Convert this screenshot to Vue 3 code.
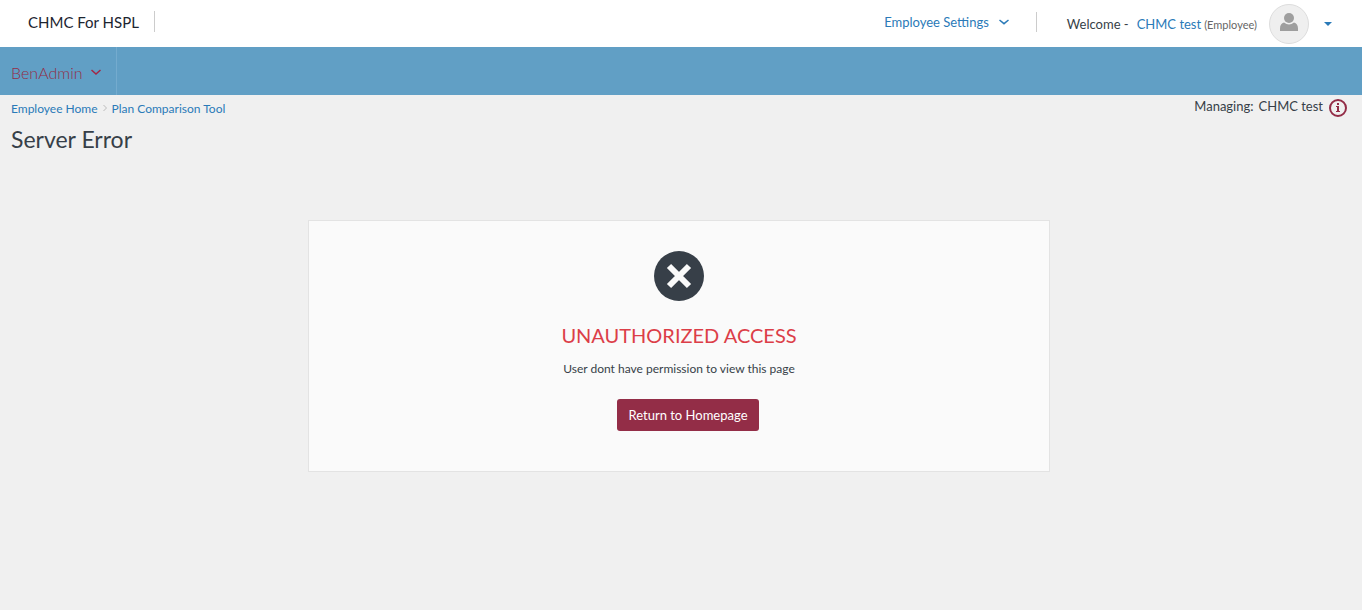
<script setup>
const trail = ['Employee Home', 'Plan Comparison Tool']
</script>

<template>
  <div class="page">
    <header class="top">
      <div class="brand">CHMC For HSPL</div>
      <div class="tools">
        <button class="settings" type="button">
          Employee Settings
          <svg width="10" height="6" viewBox="0 0 10 6"><path d="M.5 1L5 4.700 9.500 1" /></svg>
        </button>
        <div class="welcome">
          <span>Welcome -</span>
          <a href="#">CHMC test</a>
          <small>(Employee)</small>
        </div>
        <button class="account" type="button" aria-label="Account menu">
          <span class="avatar">
            <svg width="18" height="18" viewBox="0 0 18 18"><circle cx="9" cy="5" r="5" /><path d="M0 18v-2.500C0 12 1.500 10 4 9.500Q9 13.500 14 9.500C16.500 10 18 12 18 15.500V18z" /></svg>
          </span>
          <svg class="caret" width="8" height="4" viewBox="0 0 8 4"><path d="M0 0h8L4 4z" /></svg>
        </button>
      </div>
    </header>
    <nav class="menu">
      <button type="button">
        BenAdmin
        <svg width="10" height="6" viewBox="0 0 10 6"><path d="M.5 1L5 5l4.500-4" /></svg>
      </button>
    </nav>
    <div class="context">
      <nav class="crumbs" aria-label="Breadcrumb">
        <template v-for="(item, i) in trail" :key="item">
          <svg v-if="i" width="4" height="8" viewBox="0 0 4 8"><path d="M.5 1l3 3-3 3" /></svg>
          <a href="#">{{ item }}</a>
        </template>
      </nav>
      <div class="managing">
        <span>Managing:</span>
        <span>CHMC test</span>
        <button type="button" aria-label="Information">
          <svg width="20" height="20" viewBox="0 0 20 20"><circle cx="10" cy="10" r="8" /><path class="mark" d="M9 5h2v2H9zM8 8h3v5h1v1H8v-1h1V9H8z" /></svg>
        </button>
      </div>
    </div>
    <h1>Server Error</h1>
    <main>
      <section class="card">
        <svg class="fail" width="50" height="50" viewBox="0 0 50 50"><circle cx="25" cy="25" r="25" /><path d="M15 15l20 20M35 15L15 35" /></svg>
        <h2>UNAUTHORIZED ACCESS</h2>
        <p>User dont have permission to view this page</p>
        <button type="button">Return to Homepage</button>
      </section>
    </main>
  </div>
</template>

<style>
body {
  background: #fff;
}
</style>

<style scoped>
.page {
  box-sizing: border-box;
  min-height: 100vh;
  margin-right: 6px;
  background: #f0f0f0;
  color: #373f48;
  font-family: Lato, "Liberation Sans", sans-serif;
  font-size: 13px;
}
button {
  border: 0;
  padding: 0;
  background: none;
  color: inherit;
  font: inherit;
  cursor: pointer;
}
a {
  color: #2a7ab8;
  text-decoration: none;
}
svg {
  display: block;
  flex: none;
}
.top {
  display: flex;
  justify-content: space-between;
  height: 47px;
  background: #fff;
}
.brand {
  height: 21px;
  margin: 11px 0 0 28px;
  padding-right: 15px;
  border-right: 1px solid #ccc;
  color: #1c2530;
  font-size: 15px;
  line-height: 22px;
}
.tools {
  display: flex;
  align-items: center;
  padding-right: 30px;
}
.settings {
  display: flex;
  align-items: center;
  gap: 10px;
  height: 20px;
  margin-bottom: 3px;
  padding-right: 27px;
  border-right: 1px solid #ccc;
  color: #2a7ab8;
}
.settings path {
  fill: none;
  stroke: #2a7ab8;
  stroke-width: 1.5;
}
.welcome {
  display: flex;
  align-items: baseline;
  margin-left: 30px;
}
.welcome a {
  margin-left: 8px;
}
.welcome small {
  margin-left: 3px;
  color: #666;
  font-size: 11px;
}
.account {
  display: flex;
  align-items: center;
  gap: 15px;
  margin-left: 12px;
}
.avatar {
  display: flex;
  align-items: center;
  justify-content: center;
  box-sizing: border-box;
  width: 40px;
  height: 40px;
  padding-bottom: 4px;
  border: 1px solid #ddd;
  border-radius: 50%;
  background: #efefef;
}
.avatar svg {
  fill: #9e9e9e;
}
.caret {
  fill: #2a7ab8;
}
.menu {
  height: 48px;
  background: #619fc5;
}
.menu button {
  display: flex;
  align-items: center;
  gap: 8px;
  height: 48px;
  padding: 2px 15px 0 11px;
  border-right: 1px solid #74abce;
  color: #932d47;
  font-size: 16px;
  font-weight: 300;
}
.menu path {
  fill: none;
  stroke: #a32745;
  stroke-width: 1.5;
}
.context {
  display: flex;
  justify-content: space-between;
  padding: 3px 14px 0 11px;
}
.crumbs {
  display: flex;
  align-items: center;
  gap: 5px;
  height: 20px;
  font-size: 12px;
}
.crumbs path {
  fill: none;
  stroke: #bbb;
}
.managing {
  display: flex;
  gap: 5px;
  line-height: 17px;
}
.managing button {
  height: 20px;
}
.managing circle {
  fill: none;
  stroke: #932d47;
  stroke-width: 2;
}
.mark {
  fill: #932d47;
}
h1 {
  margin: 6px 11px 0;
  font-size: 23px;
  font-weight: 400;
  line-height: 30px;
}
main {
  padding: 66px 24px 20px 20px;
}
.card {
  display: flex;
  flex-direction: column;
  align-items: center;
  box-sizing: border-box;
  max-width: 742px;
  margin: 0 auto;
  padding: 30px 20px 40px;
  border: 1px solid #e3e3e3;
  background: #fafafa;
}
.fail {
  fill: #373f48;
}
.fail path {
  stroke: #fafafa;
  stroke-width: 6;
}
h2 {
  margin: 20px 0 0;
  color: #dc3e48;
  font-size: 20px;
  font-weight: 400;
  line-height: 28px;
}
p {
  margin: 10px 0 20px;
  font-size: 12px;
  line-height: 20px;
}
.card button {
  height: 32px;
  margin-left: 18px;
  padding: 0 11px;
  border-radius: 3px;
  background: #932d47;
  color: #fff;
}
</style>
